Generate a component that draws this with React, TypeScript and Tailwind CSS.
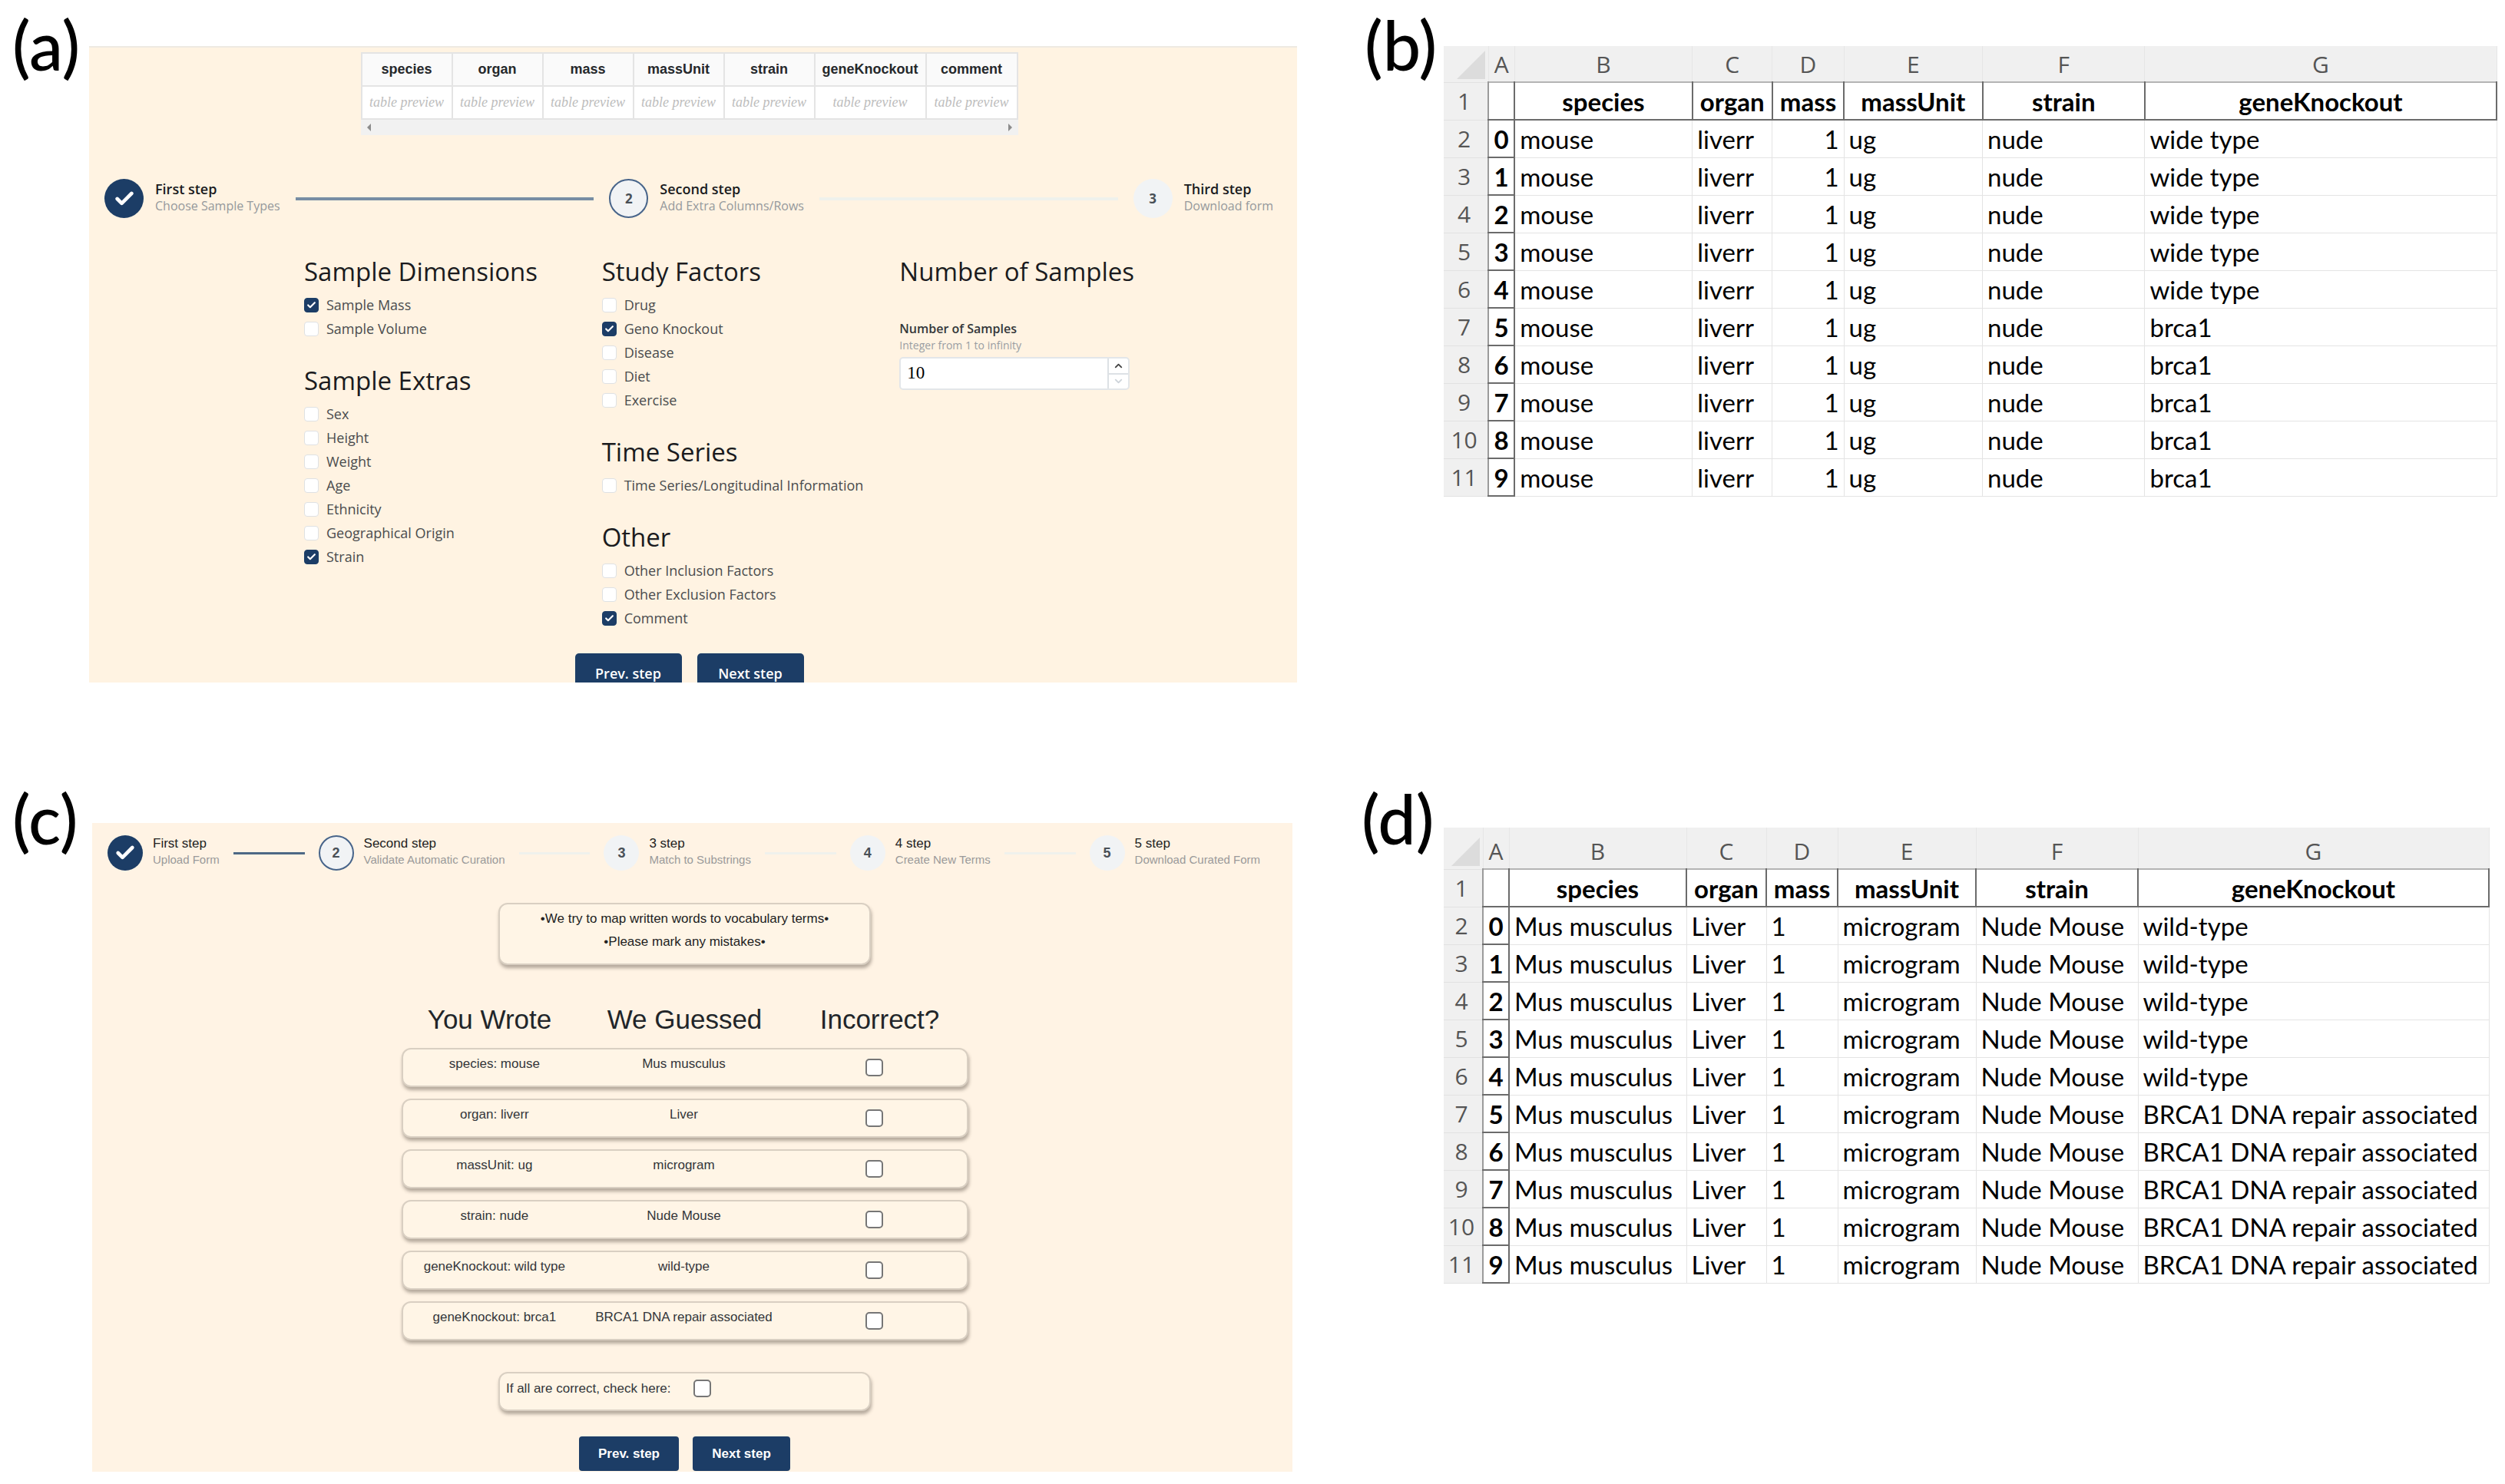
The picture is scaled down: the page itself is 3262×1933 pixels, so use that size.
import { Fragment, useState } from 'react';
import { Check, ChevronDown, ChevronUp } from 'lucide-react';

type Step = { title: string; description: string };

const previewColumns = [
  { name: 'species', width: 'w-[118px]' },
  { name: 'organ', width: 'w-[118px]' },
  { name: 'mass', width: 'w-[118px]' },
  { name: 'massUnit', width: 'w-[118px]' },
  { name: 'strain', width: 'w-[118px]' },
  { name: 'geneKnockout', width: 'w-[145px]' },
  { name: 'comment', width: 'w-[119px]' },
];

const buildSteps: Step[] = [
  { title: 'First step', description: 'Choose Sample Types' },
  { title: 'Second step', description: 'Add Extra Columns/Rows' },
  { title: 'Third step', description: 'Download form' },
];

const curateSteps: Step[] = [
  { title: 'First step', description: 'Upload Form' },
  { title: 'Second step', description: 'Validate Automatic Curation' },
  { title: '3 step', description: 'Match to Substrings' },
  { title: '4 step', description: 'Create New Terms' },
  { title: '5 step', description: 'Download Curated Form' },
];

const leftGroups = [
  { title: 'Sample Dimensions', options: ['Sample Mass', 'Sample Volume'] },
  {
    title: 'Sample Extras',
    options: [
      'Sex',
      'Height',
      'Weight',
      'Age',
      'Ethnicity',
      'Geographical Origin',
      'Strain',
    ],
  },
];

const middleGroups = [
  {
    title: 'Study Factors',
    options: ['Drug', 'Geno Knockout', 'Disease', 'Diet', 'Exercise'],
  },
  { title: 'Time Series', options: ['Time Series/Longitudinal Information'] },
  {
    title: 'Other',
    options: ['Other Inclusion Factors', 'Other Exclusion Factors', 'Comment'],
  },
];

const guesses = [
  { wrote: 'species: mouse', guessed: 'Mus musculus' },
  { wrote: 'organ: liverr', guessed: 'Liver' },
  { wrote: 'massUnit: ug', guessed: 'microgram' },
  { wrote: 'strain: nude', guessed: 'Nude Mouse' },
  { wrote: 'geneKnockout: wild type', guessed: 'wild-type' },
  { wrote: 'geneKnockout: brca1', guessed: 'BRCA1 DNA repair associated' },
];

const headers = ['species', 'organ', 'mass', 'massUnit', 'strain', 'geneKnockout'];
const letters = ['A', 'B', 'C', 'D', 'E', 'F', 'G'];
const columnWidths = [
  'w-[34px]',
  'w-[231px]',
  'w-[104px]',
  'w-[93px]',
  'w-[180px]',
  'w-[211px]',
  'w-[457px]',
];

const rawRows = Array.from({ length: 10 }, (_, i) => [
  'mouse',
  'liverr',
  '1',
  'ug',
  'nude',
  i < 5 ? 'wide type' : 'brca1',
]);

const curatedRows = Array.from({ length: 10 }, (_, i) => [
  'Mus musculus',
  'Liver',
  '1',
  'microgram',
  'Nude Mouse',
  i < 5 ? 'wild-type' : 'BRCA1 DNA repair associated',
]);

function Stepper({ steps, compact = false }: { steps: Step[]; compact?: boolean }) {
  const active = 1;
  return (
    <div
      className={
        compact
          ? 'flex items-center gap-[18px] pt-4 pr-[42px] pl-5'
          : 'flex items-center gap-5 pr-[31px] pl-5'
      }
    >
      {steps.map((step, i) => (
        <Fragment key={step.title}>
          {i > 0 && (
            <div
              className={`flex-1 ${compact ? 'h-[3px]' : 'h-1'} ${
                i <= active
                  ? compact
                    ? 'bg-[#4d6885]'
                    : 'bg-[#778da3]'
                  : 'bg-[#eff1ec]'
              }`}
            />
          )}
          <div
            className={`flex items-center ${compact ? 'gap-[13px]' : 'gap-[15px]'}`}
          >
            <div
              className={`flex shrink-0 items-center justify-center rounded-full font-bold text-[#495057] ${
                compact ? 'size-[46px] text-[18px]' : 'size-[51px] text-[17px]'
              } ${
                i < active
                  ? 'bg-[#1c3d66]'
                  : i === active
                    ? 'border-2 border-[#47648a] bg-[#f1f3f5]'
                    : 'bg-[#f1f3f5]'
              }`}
            >
              {i < active ? (
                <Check className="size-[28px] text-white" strokeWidth={4} />
              ) : (
                i + 1
              )}
            </div>
            <div className="pb-1 whitespace-nowrap">
              <p
                className={
                  compact
                    ? 'text-[17px] leading-[21px] font-medium text-[#222]'
                    : 'text-[18px] leading-[22px] font-semibold text-[#1a1b1e]'
                }
              >
                {step.title}
              </p>
              <p
                className={
                  compact
                    ? 'text-[15px] leading-[21px] text-[#9a9a9a]'
                    : 'text-[16px] leading-[22px] text-[#95999c]'
                }
              >
                {step.description}
              </p>
            </div>
          </div>
        </Fragment>
      ))}
    </div>
  );
}

function OptionGroup({
  title,
  options,
  selected,
  onToggle,
}: {
  title: string;
  options: string[];
  selected: string[];
  onToggle: (option: string) => void;
}) {
  return (
    <section>
      <h2 className="mb-1.5 text-[33px] leading-[44px] font-medium whitespace-nowrap text-[#1a1b1e]">
        {title}
      </h2>
      {options.map((option) => (
        <label
          key={option}
          className="flex h-[31px] items-center gap-2.5 text-[18px] whitespace-nowrap text-[#4a4c4e]"
        >
          <span className="relative flex size-[19px]">
            <input
              type="checkbox"
              className="peer size-[19px] appearance-none rounded-[4px] border border-[#dfe1e3] bg-white checked:border-[#1c3d66] checked:bg-[#1c3d66]"
              checked={selected.includes(option)}
              onChange={() => onToggle(option)}
            />
            <Check
              className="pointer-events-none absolute inset-[3px] hidden size-[13px] text-white peer-checked:block"
              strokeWidth={4}
            />
          </span>
          {option}
        </label>
      ))}
    </section>
  );
}

function BuildForm() {
  const [selected, setSelected] = useState([
    'Sample Mass',
    'Strain',
    'Geno Knockout',
    'Comment',
  ]);
  const [count, setCount] = useState(10);

  const toggle = (option: string) => {
    setSelected(
      selected.includes(option)
        ? selected.filter((o) => o !== option)
        : [...selected, option]
    );
  };

  return (
    <div className="border-t-2 border-[#eeeae2] bg-[#fff3e2] pt-1.5 font-['Open_Sans',sans-serif]">
      <div className="flex justify-center pr-2.5">
        <div className="w-[856px]">
          <table className="w-full table-fixed border-collapse bg-white">
            <thead>
              <tr className="h-[43px] bg-[#fafafa] font-['Liberation_Sans',sans-serif] text-[18px] text-[#25282b]">
                {previewColumns.map((col) => (
                  <th
                    key={col.name}
                    className={`border-2 border-[#e4e4e4] p-0 font-bold ${col.width}`}
                  >
                    {col.name}
                  </th>
                ))}
              </tr>
            </thead>
            <tbody>
              <tr className="h-[43px] text-center font-['Liberation_Serif',serif] text-[18px] text-[#bdbdbd] italic">
                {previewColumns.map((col) => (
                  <td key={col.name} className="border-2 border-[#e4e4e4] p-0">
                    table preview
                  </td>
                ))}
              </tr>
            </tbody>
          </table>
          <div className="flex h-5 items-center justify-between bg-[#f1f1f1] px-2">
            <svg className="h-2.5 w-[5px]" viewBox="0 0 5 10" fill="#8c8c8c">
              <path d="M5 0v10L0 5z" />
            </svg>
            <svg className="h-2.5 w-[5px]" viewBox="0 0 5 10" fill="#8c8c8c">
              <path d="M0 0v10l5-5z" />
            </svg>
          </div>
        </div>
      </div>

      <div className="mt-[57px]">
        <Stepper steps={buildSteps} />
      </div>

      <div className="mt-12 grid grid-cols-3 pr-[130px] pl-[280px]">
        <div className="flex flex-col gap-[30px]">
          {leftGroups.map((group) => (
            <OptionGroup
              key={group.title}
              {...group}
              selected={selected}
              onToggle={toggle}
            />
          ))}
        </div>
        <div className="flex flex-col gap-[30px]">
          {middleGroups.map((group) => (
            <OptionGroup
              key={group.title}
              {...group}
              selected={selected}
              onToggle={toggle}
            />
          ))}
        </div>
        <div>
          <h2 className="text-[33px] leading-[44px] font-medium whitespace-nowrap text-[#1a1b1e]">
            Number of Samples
          </h2>
          <label
            htmlFor="sample-count"
            className="mt-[41px] block text-[16px] leading-[22px] font-semibold text-[#34373a]"
          >
            Number of Samples
          </label>
          <p className="text-[14px] leading-[22px] text-[#9a9ea2]">
            Integer from 1 to infinity
          </p>
          <div className="mt-1 flex h-[43px] w-[300px] overflow-hidden rounded-[5px] border-2 border-[#e3e6e9] bg-white">
            <input
              id="sample-count"
              type="text"
              className="min-w-0 flex-1 px-2 font-['Liberation_Serif',serif] text-[23px] text-black outline-none"
              value={count}
              onChange={(e) => setCount(Number(e.target.value) || 1)}
            />
            <div className="flex w-[27px] flex-col border-l-2 border-[#dde1e5]">
              <button
                aria-label="Increase"
                className="flex flex-1 items-center justify-center border-b-2 border-[#dde1e5] text-[#444]"
                onClick={() => setCount(count + 1)}
              >
                <ChevronUp className="size-[15px]" strokeWidth={3} />
              </button>
              <button
                aria-label="Decrease"
                className="flex flex-1 items-center justify-center text-[#ced4da]"
                onClick={() => setCount(Math.max(1, count - 1))}
              >
                <ChevronDown className="size-[15px]" strokeWidth={3} />
              </button>
            </div>
          </div>
        </div>
      </div>

      <div className="mt-[30px] flex h-[38px] justify-center gap-5 overflow-hidden pr-2.5 text-[18px] font-semibold text-white">
        <button className="h-[53px] w-[139px] rounded-[5px] bg-[#1c3d66]">
          Prev. step
        </button>
        <button className="h-[53px] w-[139px] rounded-[5px] bg-[#1c3d66]">
          Next step
        </button>
      </div>
    </div>
  );
}

const card =
  'rounded-xl border-2 border-[#d9cfc2] bg-[#fff5e6] shadow-[1px_4px_4px_rgba(70,60,50,0.4)]';
const checkbox =
  'size-[23px] appearance-none rounded-[5px] border-2 border-[#767676] bg-white checked:bg-[#1c3d66]';

function CurateForm() {
  return (
    <div className="bg-[#fff3e4] pb-px font-['Liberation_Sans',sans-serif] text-[17px] text-[#33363a]">
      <Stepper steps={curateSteps} compact />

      <div className="flex flex-col items-center pr-5">
        <div
          className={`mt-[42px] h-[81px] w-[485px] pt-1 text-center leading-[30px] text-[#222] ${card}`}
        >
          <p>•We try to map written words to vocabulary terms•</p>
          <p>•Please mark any mistakes•</p>
        </div>

        <table className="mt-[51px] block">
          <thead className="block">
            <tr className="grid grid-cols-[254px_254px_254px] justify-center text-[35px] leading-[40px] text-[#212529]">
              <th className="p-0 font-normal">You Wrote</th>
              <th className="p-0 font-normal">We Guessed</th>
              <th className="p-0 font-normal">Incorrect?</th>
            </tr>
          </thead>
          <tbody className="mx-auto mt-[17px] flex w-[738px] flex-col gap-[15px]">
            {guesses.map((row) => (
              <tr
                key={row.wrote}
                className={`grid h-[51px] grid-cols-[240fr_256fr_242fr] text-center leading-[38px] whitespace-nowrap ${card}`}
              >
                <td className="p-0">{row.wrote}</td>
                <td className="p-0">{row.guessed}</td>
                <td className="flex justify-center p-0 pt-3">
                  <input
                    type="checkbox"
                    aria-label={`${row.wrote} is incorrect`}
                    className={checkbox}
                  />
                </td>
              </tr>
            ))}
          </tbody>
        </table>

        <div className={`mt-[41px] h-[51px] w-[485px] px-2 pt-[7px] ${card}`}>
          <label className="flex items-center gap-[30px]">
            If all are correct, check here:
            <input type="checkbox" className={checkbox} />
          </label>
        </div>

        <div className="mt-[33px] flex gap-[18px] font-bold text-white">
          <button className="h-[45px] w-[130px] rounded-[4px] bg-[#1c3d66]">
            Prev. step
          </button>
          <button className="h-[45px] w-[127px] rounded-[4px] bg-[#1c3d66]">
            Next step
          </button>
        </div>
      </div>
    </div>
  );
}

function Sheet({
  rows,
  rightAlignMass = false,
  cornerWidth,
  headHeight,
}: {
  rows: string[][];
  rightAlignMass?: boolean;
  cornerWidth: string;
  headHeight: string;
}) {
  return (
    <table className="w-full table-fixed border-collapse font-['Lato',sans-serif] text-[33px] leading-[40px] whitespace-nowrap text-black">
      <colgroup>
        <col className={cornerWidth} />
        {columnWidths.map((width, i) => (
          <col key={i} className={width} />
        ))}
      </colgroup>
      <thead>
        <tr
          className={`bg-[#f0f0f0] font-['Open_Sans',sans-serif] text-[30px] text-[#555] ${headHeight}`}
        >
          <th className="p-0 align-bottom">
            <svg className="mr-1 mb-1 ml-auto size-[37px]" viewBox="0 0 37 37" fill="#dcdcdc">
              <path d="M37 0v37H0z" />
            </svg>
          </th>
          {letters.map((letter) => (
            <th
              key={letter}
              className="border-x border-[#e6e6e6] p-0 pb-0.5 align-bottom font-normal"
            >
              {letter}
            </th>
          ))}
        </tr>
      </thead>
      <tbody>
        <tr className="h-[49px]">
          <th className="border-y border-[#e2e2e2] bg-[#f0f0f0] p-0 pr-1 font-['Open_Sans',sans-serif] text-[30px] font-normal text-[#555]">
            1
          </th>
          <td className="border-2 border-t-[#b4b4b4] border-r-[#6b6b6b] border-b-[#6b6b6b] border-l-[#9b9b9b] p-0" />
          {headers.map((header) => (
            <th
              key={header}
              className="border-2 border-[#6b6b6b] border-t-[#b4b4b4] p-0 font-bold"
            >
              {header}
            </th>
          ))}
        </tr>
        {rows.map((row, i) => (
          <tr key={i} className="h-[49px]">
            <th className="border-y border-[#e2e2e2] bg-[#f0f0f0] p-0 pr-1 font-['Open_Sans',sans-serif] text-[30px] font-normal text-[#555]">
              {i + 2}
            </th>
            <th className="border-2 border-[#6b6b6b] border-l-[#9b9b9b] p-0 font-bold">
              {i}
            </th>
            {row.map((cell, j) => (
              <td
                key={j}
                className={`border border-[#e4e4e4] px-1.5 py-0 ${
                  j === 2 && rightAlignMass ? 'text-right' : ''
                }`}
              >
                {cell}
              </td>
            ))}
          </tr>
        ))}
      </tbody>
    </table>
  );
}

const caption =
  "shrink-0 font-['Lato',sans-serif] text-[88px] leading-[80px] font-medium text-black";

export default function App() {
  return (
    <main className="grid grid-cols-[1690fr_1572fr] gap-y-[137px] overflow-hidden bg-white pt-[18px] pb-4">
      <figure className="flex items-start">
        <figcaption className={`w-[116px] pl-4 ${caption}`}>(a)</figcaption>
        <div className="mt-[42px] min-w-0 flex-1">
          <BuildForm />
        </div>
      </figure>
      <figure className="flex items-start pr-[10px]">
        <figcaption className={`w-[191px] pl-[88px] ${caption}`}>(b)</figcaption>
        <div className="mt-[42px] min-w-0 flex-1">
          <Sheet
            rows={rawRows}
            rightAlignMass
            cornerWidth="w-[58px]"
            headHeight="h-[47px]"
          />
        </div>
      </figure>
      <figure className="flex items-start pr-1.5">
        <figcaption className={`w-[120px] pl-4 ${caption}`}>(c)</figcaption>
        <div className="mt-[46px] min-w-0 flex-1">
          <CurateForm />
        </div>
      </figure>
      <figure className="flex items-start pr-5">
        <figcaption className={`w-[191px] pl-[84px] ${caption}`}>(d)</figcaption>
        <div className="mt-[52px] min-w-0 flex-1">
          <Sheet rows={curatedRows} cornerWidth="w-[51px]" headHeight="h-[54px]" />
        </div>
      </figure>
    </main>
  );
}
